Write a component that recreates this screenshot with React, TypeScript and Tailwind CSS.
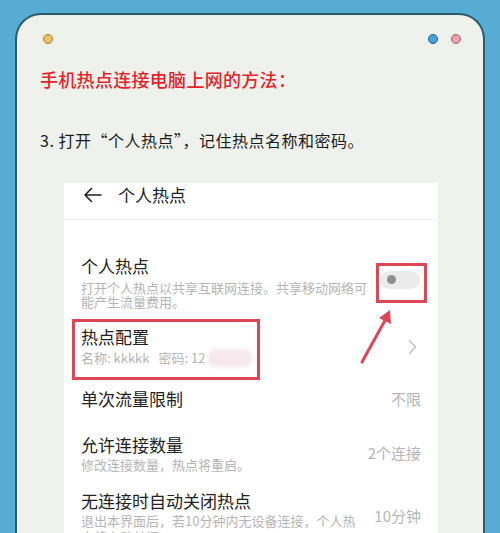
import React from 'react';

const font = { fontFamily: '"Noto Sans CJK SC", "Noto Sans", sans-serif' };

function Toggle() {
  return (
    <div className="w-[40px] h-[18px] rounded-full bg-[#ebebeb] flex items-center pl-[7px]">
      <div className="w-[9px] h-[9px] rounded-full bg-[#8f8f8f]" />
    </div>
  );
}

function Chevron() {
  return (
    <svg width="9" height="16" viewBox="0 0 9 16" fill="none">
      <path d="M1.5 1.5 L7.5 8 L1.5 14.5" stroke="#c4c4c4" strokeWidth="1.6" strokeLinecap="round" strokeLinejoin="round" />
    </svg>
  );
}

export default function App() {
  return (
    <div className="w-[500px] h-[533px] overflow-hidden bg-[#57acd4] pt-[13px] px-[15px]" style={font}>
      <div className="relative h-[540px] rounded-t-[26px] border-2 border-b-0 border-[#2b5a6c] bg-[#eef1ec]">
        {/* window dots */}
        <div className="flex items-center justify-between pt-[19px] pl-[26px] pr-[22px]">
          <div className="w-[10px] h-[10px] rounded-full bg-[#ecc262] border border-[#a97f34]" />
          <div className="flex gap-[13px]">
            <div className="w-[10px] h-[10px] rounded-full bg-[#46a2dc] border border-[#2a5f86]" />
            <div className="w-[10px] h-[10px] rounded-full bg-[#eaa3ab] border border-[#9b6168]" />
          </div>
        </div>

        <div className="mt-[22px] ml-[23px] text-[18px] leading-[26px] font-medium text-[#e5232b] tracking-[0.3px]">
          手机热点连接电脑上网的方法：
        </div>

        <div className="mt-[36px] ml-[23px] text-[16px] leading-[24px] text-[#1c1c1c] tracking-[0.5px]">
          3. 打开“个人热点”，记住热点名称和密码。
        </div>

        {/* phone screenshot */}
        <div className="mt-[31px] ml-[47px] w-[374px] h-[360px] bg-white text-[#222]">
          <div className="h-[37px] flex items-start pl-[19px] border-b border-[#f1f1f1]">
            <svg width="20" height="24" viewBox="0 0 20 24" fill="none">
              <path d="M18 12 H2 M8.5 5.5 L2 12 L8.5 18.5" stroke="#222" strokeWidth="1.6" strokeLinecap="round" strokeLinejoin="round" />
            </svg>
            <span className="ml-[15px] text-[17px] leading-[24px]">个人热点</span>
          </div>

          <div className="flex items-center justify-between pl-[17px] pr-[18px] pt-[34px]">
            <div className="w-[292px]">
              <div className="text-[17px] leading-[24px]">个人热点</div>
              <div className="mt-[3px] text-[13px] leading-[14px] text-[#b5b5b5]">
                打开个人热点以共享互联网连接。共享移动网络可能产生流量费用。
              </div>
            </div>
            <div className="-mt-[4px]">
              <Toggle />
            </div>
          </div>

          <div className="flex items-center justify-between pl-[17px] pr-[21px] mt-[17px]">
            <div>
              <div className="text-[17px] leading-[22px]">热点配置</div>
              <div className="mt-[1px] text-[13px] leading-[16px] text-[#b5b5b5] flex items-center">
                <span>名称: kkkkk</span>
                <span className="ml-[9px]">密码: 12</span>
                <span className="ml-[2px] w-[46px] h-[18px] rounded-full bg-[#f6e8ec] blur-[2px]" />
              </div>
            </div>
            <Chevron />
          </div>

          <div className="flex items-center justify-between pl-[17px] pr-[17px] mt-[20px]">
            <div className="text-[17px] leading-[24px]">单次流量限制</div>
            <div className="text-[15px] leading-[24px] text-[#b5b5b5]">不限</div>
          </div>

          <div className="flex items-center justify-between pl-[17px] pr-[17px] mt-[22px]">
            <div>
              <div className="text-[17px] leading-[24px]">允许连接数量</div>
              <div className="text-[13px] leading-[16px] text-[#b5b5b5]">修改连接数量，热点将重启。</div>
            </div>
            <div className="text-[15px] leading-[24px] text-[#b5b5b5]">2个连接</div>
          </div>

          <div className="flex items-center justify-between pl-[17px] pr-[17px] mt-[16px]">
            <div className="w-[285px]">
              <div className="text-[17px] leading-[24px]">无连接时自动关闭热点</div>
              <div className="text-[13px] leading-[16px] text-[#b5b5b5]">
                退出本界面后，若10分钟内无设备连接，个人热点将自动关闭。
              </div>
            </div>
            <div className="text-[15px] leading-[24px] text-[#b5b5b5] -mt-[2px]">10分钟</div>
          </div>
        </div>

        {/* annotation overlays */}
        <div className="absolute left-[359px] top-[248px] w-[51px] h-[40px] border-[3px] border-[#dc4655]" />
        <div className="absolute left-[55px] top-[304px] w-[188px] h-[61px] border-[3px] border-[#dc4655]" />
        <svg className="absolute left-[340px] top-[292px]" width="40" height="60" viewBox="0 0 40 60" fill="none">
          <path d="M5 55 L31 8" stroke="#dc4655" strokeWidth="3" strokeLinecap="round" />
          <path d="M33 3 L34 17 L22 11 Z" fill="#dc4655" />
        </svg>
      </div>
    </div>
  );
}
